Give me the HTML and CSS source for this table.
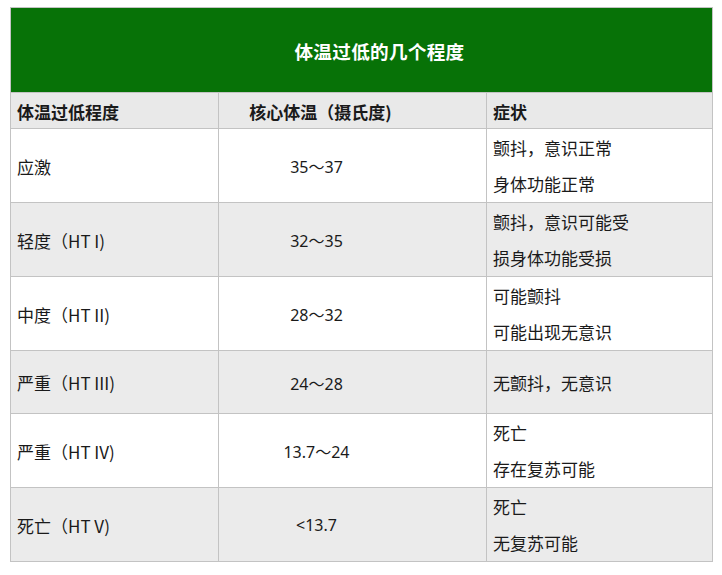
FILE: index.html
```html
<!DOCTYPE html>
<html lang="zh-CN">
<head>
<meta charset="utf-8">
<link rel="stylesheet" href="styles.css">
</head>
<body>
<table class="ht">
  <colgroup>
    <col class="c1">
    <col class="c2">
    <col class="c3">
  </colgroup>
  <thead>
    <tr class="title-row"><th colspan="3" class="title">体温过低的几个程度</th></tr>
    <tr class="head-row">
      <th class="h1">体温过低程度</th>
      <th class="h2">核心体温（摄氏度)</th>
      <th class="h3">症状</th>
    </tr>
  </thead>
  <tbody>
    <tr class="r tall">
      <td class="name">应激</td>
      <td class="temp">35～37</td>
      <td class="sym"><div class="ln">颤抖，意识正常</div><div class="ln">身体功能正常</div></td>
    </tr>
    <tr class="r tall alt">
      <td class="name">轻度（HT I)</td>
      <td class="temp">32～35</td>
      <td class="sym"><div class="ln">颤抖，意识可能受</div><div class="ln">损身体功能受损</div></td>
    </tr>
    <tr class="r tall">
      <td class="name">中度（HT II)</td>
      <td class="temp">28～32</td>
      <td class="sym"><div class="ln">可能颤抖</div><div class="ln">可能出现无意识</div></td>
    </tr>
    <tr class="r short alt">
      <td class="name">严重（HT III)</td>
      <td class="temp">24～28</td>
      <td class="sym"><div class="ln">无颤抖，无意识</div></td>
    </tr>
    <tr class="r tall">
      <td class="name">严重（HT IV)</td>
      <td class="temp">13.7～24</td>
      <td class="sym"><div class="ln">死亡</div><div class="ln">存在复苏可能</div></td>
    </tr>
    <tr class="r tall alt">
      <td class="name">死亡（HT V)</td>
      <td class="temp">&lt;13.7</td>
      <td class="sym"><div class="ln">死亡</div><div class="ln">无复苏可能</div></td>
    </tr>
  </tbody>
</table>
</body>
</html>
```
FILE: styles.css
```css
html, body {
  margin: 0;
  padding: 0;
  background: #ffffff;
}
body {
  padding: 7px 0 0 10px;
  font-family: "Noto Sans CJK SC", "Noto Sans", sans-serif;
  color: #1a1a1a;
  font-size: 17px;
}
.ht {
  width: 702px;
  border-collapse: collapse;
  table-layout: fixed;
}
.c1 { width: 208px; }
.c2 { width: 268px; }
.c3 { width: 226px; }
.ht th, .ht td {
  border: 1px solid #c3c3c3;
  padding: 0;
  vertical-align: middle;
}
.title-row { height: 85px; }
.ht .title {
  background: #077207;
  color: #ffffff;
  font-size: 18.6px;
  font-weight: 700;
  text-align: center;
  padding-left: 36px;
  letter-spacing: 0.3px;
}
.head-row {
  height: 36px;
  background: #e9e9e9;
}
.head-row th {
  font-weight: 700;
  font-size: 17px;
  padding-top: 2px;
}
.ht .h1 { text-align: left; padding-left: 6px; }
.ht .h2 { text-align: center; padding-right: 64px; }
.ht .h3 { text-align: left; padding-left: 6px; }
.tall { height: 73px; }
.short { height: 63px; }
.alt { background: #ebebeb; }
.ht .name {
  padding-left: 6px;
  padding-top: 1px;
}
.ht .temp {
  text-align: center;
  padding-right: 72px;
  padding-top: 1px;
  font-family: "Noto Sans", "Noto Sans CJK SC", sans-serif;
  font-size: 16px;
}
.ht .sym {
  padding-left: 6px;
  padding-top: 1px;
}
.ln {
  line-height: 36px;
  white-space: nowrap;
}
```
